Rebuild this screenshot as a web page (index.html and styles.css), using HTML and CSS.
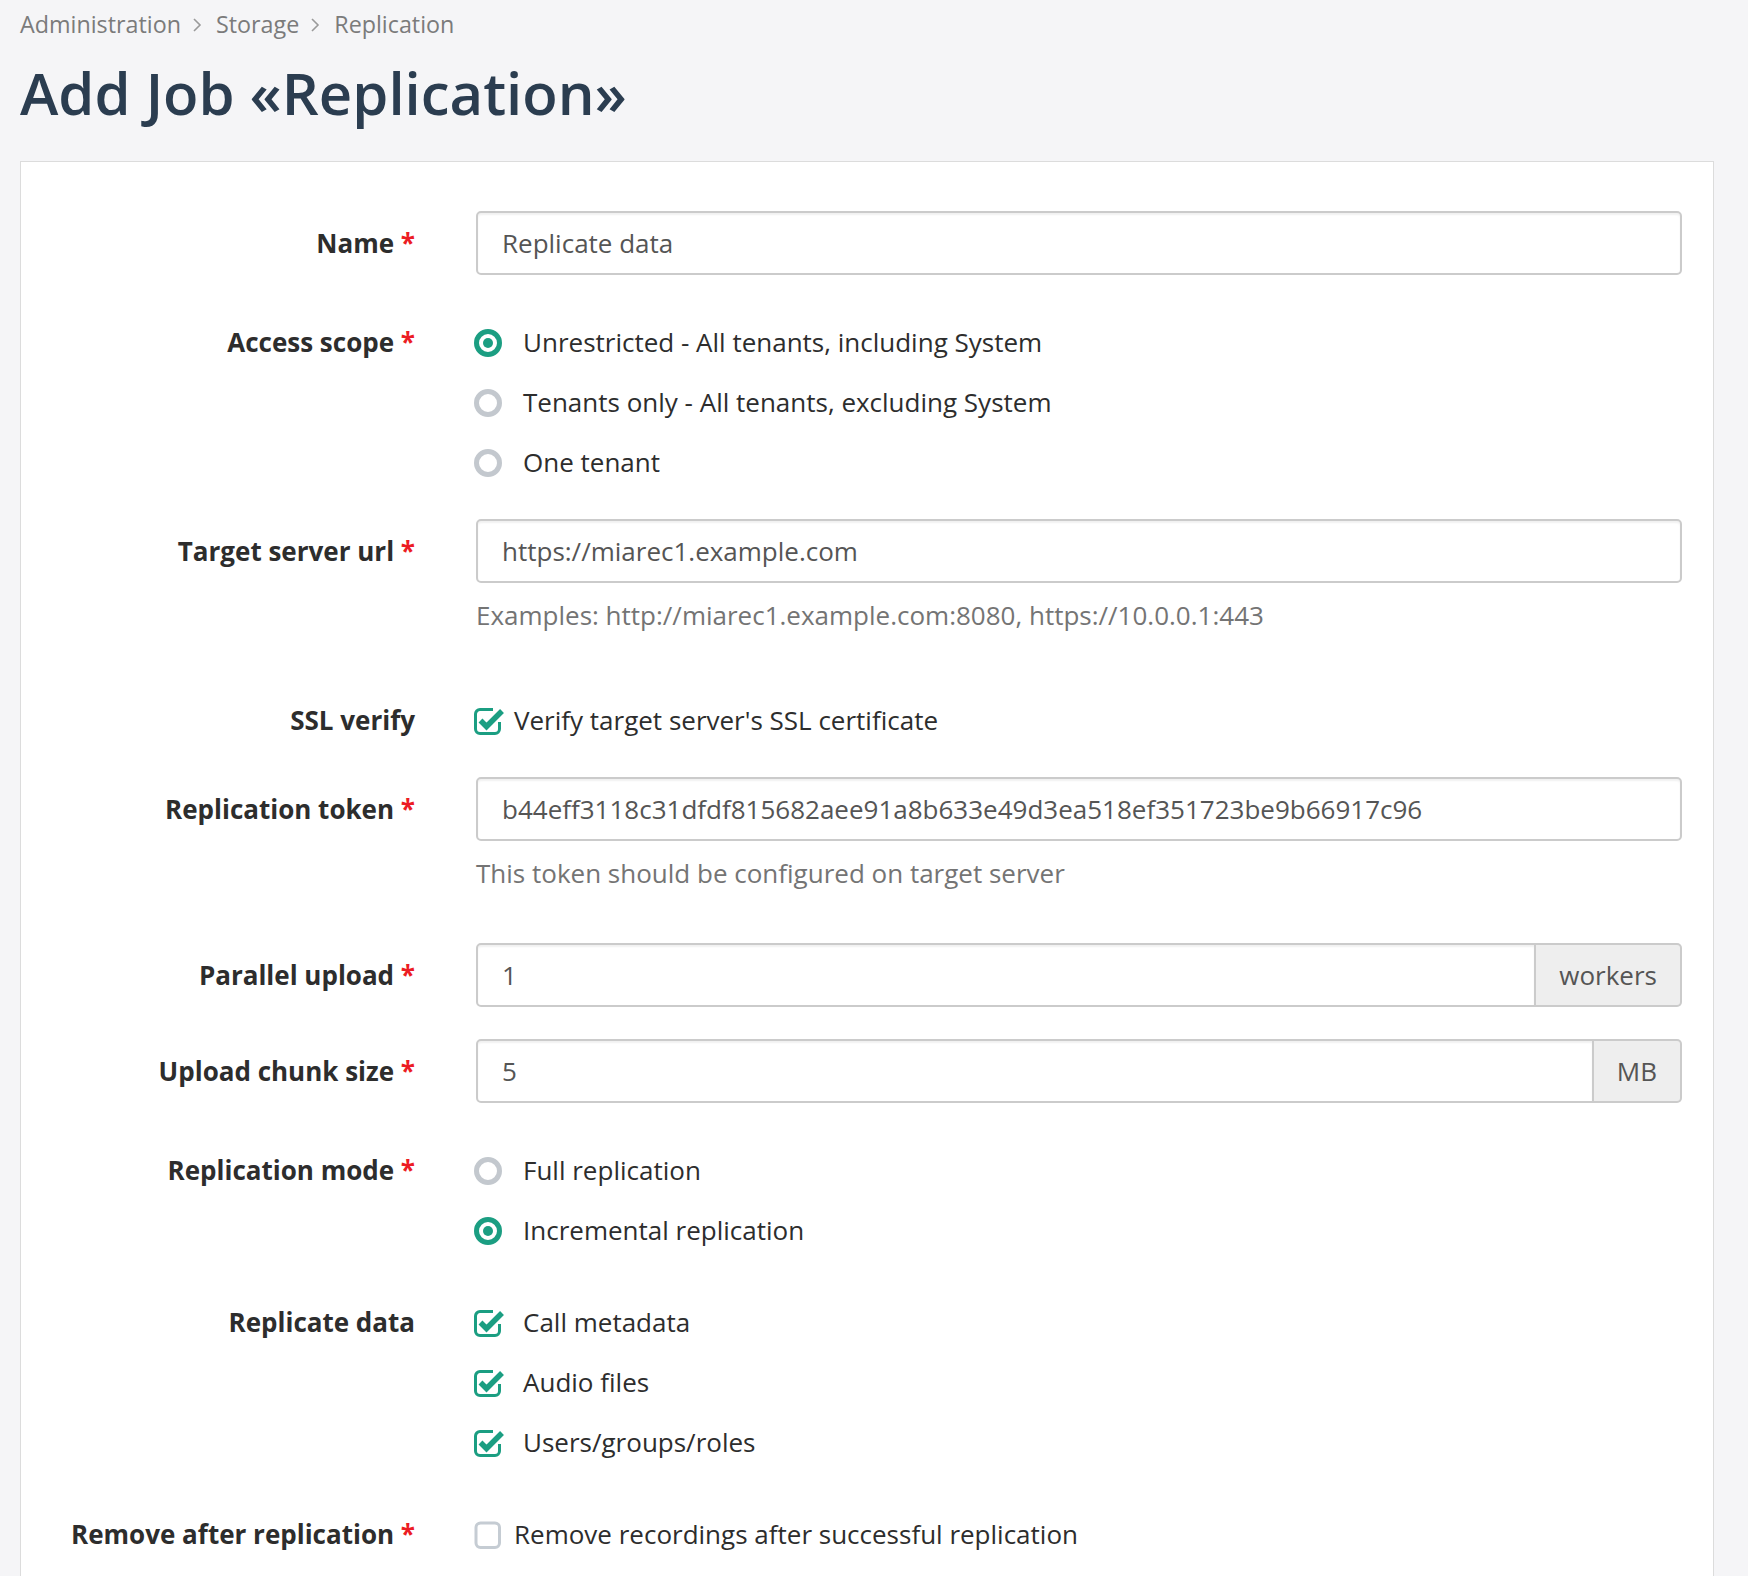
FILE: index.html
```html
<!DOCTYPE html>
<html lang="en">
<head>
<meta charset="utf-8">
<title>Add Job «Replication»</title>
<link rel="stylesheet" href="styles.css">
</head>
<body>
<div class="page">
  <nav class="breadcrumb">
    <a class="crumb">Administration</a>
    <svg class="sep" viewBox="0 0 10 16" width="10" height="16"><path d="M2 2 L8 8 L2 14" fill="none" stroke="#9a9a9a" stroke-width="1.6"/></svg>
    <a class="crumb">Storage</a>
    <svg class="sep" viewBox="0 0 10 16" width="10" height="16"><path d="M2 2 L8 8 L2 14" fill="none" stroke="#9a9a9a" stroke-width="1.6"/></svg>
    <span class="crumb">Replication</span>
  </nav>
  <h1 class="title">Add Job «Replication»</h1>

  <div class="card">
    <form class="form">
      <div class="group">
        <label class="label">Name <span class="req">*</span></label>
        <div class="control"><div class="input">Replicate data</div></div>
      </div>

      <div class="group">
        <label class="label list-label">Access scope <span class="req">*</span></label>
        <div class="control list">
          <div class="item"><svg class="radio" viewBox="0 0 28 28"><circle cx="14" cy="14" r="11.5" fill="none" stroke="#1b9e82" stroke-width="5"/><circle cx="14" cy="14" r="5" fill="#1b9e82"/></svg><span>Unrestricted - All tenants, including System</span></div>
          <div class="item"><svg class="radio" viewBox="0 0 28 28"><circle cx="14" cy="14" r="11.5" fill="none" stroke="#c3c8ce" stroke-width="5"/></svg><span>Tenants only - All tenants, excluding System</span></div>
          <div class="item"><svg class="radio" viewBox="0 0 28 28"><circle cx="14" cy="14" r="11.5" fill="none" stroke="#c3c8ce" stroke-width="5"/></svg><span>One tenant</span></div>
        </div>
      </div>

      <div class="group">
        <label class="label">Target server url <span class="req">*</span></label>
        <div class="control">
          <div class="input">https://miarec1.example.com</div>
          <p class="hint">Examples: http://miarec1.example.com:8080, https://10.0.0.1:443</p>
        </div>
      </div>

      <div class="group">
        <label class="label list-label">SSL verify</label>
        <div class="control list">
          <div class="item single"><svg class="check" viewBox="0 0 30 30"><path d="M19 3.5 H6 a4.5 4.5 0 0 0 -4.5 4.5 V23 a4.5 4.5 0 0 0 4.5 4.5 H21 a4.5 4.5 0 0 0 4.5 -4.5 V16" fill="none" stroke="#1b9e82" stroke-width="3"/><path d="M6.5 14.5 L12.5 20.5 L28 5" fill="none" stroke="#1b9e82" stroke-width="5.5"/></svg><span>Verify target server's SSL certificate</span></div>
        </div>
      </div>

      <div class="group">
        <label class="label">Replication token <span class="req">*</span></label>
        <div class="control">
          <div class="input">b44eff3118c31dfdf815682aee91a8b633e49d3ea518ef351723be9b66917c96</div>
          <p class="hint">This token should be configured on target server</p>
        </div>
      </div>

      <div class="group">
        <label class="label">Parallel upload <span class="req">*</span></label>
        <div class="control">
          <div class="input-group"><div class="input grow">1</div><div class="addon">workers</div></div>
        </div>
      </div>

      <div class="group">
        <label class="label">Upload chunk size <span class="req">*</span></label>
        <div class="control">
          <div class="input-group"><div class="input grow">5</div><div class="addon">MB</div></div>
        </div>
      </div>

      <div class="group">
        <label class="label list-label">Replication mode <span class="req">*</span></label>
        <div class="control list">
          <div class="item"><svg class="radio" viewBox="0 0 28 28"><circle cx="14" cy="14" r="11.5" fill="none" stroke="#c3c8ce" stroke-width="5"/></svg><span>Full replication</span></div>
          <div class="item"><svg class="radio" viewBox="0 0 28 28"><circle cx="14" cy="14" r="11.5" fill="none" stroke="#1b9e82" stroke-width="5"/><circle cx="14" cy="14" r="5" fill="#1b9e82"/></svg><span>Incremental replication</span></div>
        </div>
      </div>

      <div class="group">
        <label class="label list-label">Replicate data</label>
        <div class="control list">
          <div class="item"><svg class="check" viewBox="0 0 30 30"><path d="M19 3.5 H6 a4.5 4.5 0 0 0 -4.5 4.5 V23 a4.5 4.5 0 0 0 4.5 4.5 H21 a4.5 4.5 0 0 0 4.5 -4.5 V16" fill="none" stroke="#1b9e82" stroke-width="3"/><path d="M6.5 14.5 L12.5 20.5 L28 5" fill="none" stroke="#1b9e82" stroke-width="5.5"/></svg><span>Call metadata</span></div>
          <div class="item"><svg class="check" viewBox="0 0 30 30"><path d="M19 3.5 H6 a4.5 4.5 0 0 0 -4.5 4.5 V23 a4.5 4.5 0 0 0 4.5 4.5 H21 a4.5 4.5 0 0 0 4.5 -4.5 V16" fill="none" stroke="#1b9e82" stroke-width="3"/><path d="M6.5 14.5 L12.5 20.5 L28 5" fill="none" stroke="#1b9e82" stroke-width="5.5"/></svg><span>Audio files</span></div>
          <div class="item"><svg class="check" viewBox="0 0 30 30"><path d="M19 3.5 H6 a4.5 4.5 0 0 0 -4.5 4.5 V23 a4.5 4.5 0 0 0 4.5 4.5 H21 a4.5 4.5 0 0 0 4.5 -4.5 V16" fill="none" stroke="#1b9e82" stroke-width="3"/><path d="M6.5 14.5 L12.5 20.5 L28 5" fill="none" stroke="#1b9e82" stroke-width="5.5"/></svg><span>Users/groups/roles</span></div>
        </div>
      </div>

      <div class="group">
        <label class="label list-label">Remove after replication <span class="req">*</span></label>
        <div class="control list">
          <div class="item single"><svg class="check" viewBox="0 0 30 30"><rect x="2" y="3" width="23.5" height="24.5" rx="4.5" fill="none" stroke="#c5ccd3" stroke-width="3"/></svg><span>Remove recordings after successful replication</span></div>
        </div>
      </div>
    </form>
  </div>
</div>
</body>
</html>
```

FILE: styles.css
```css
* { box-sizing: border-box; }

html, body {
  margin: 0;
  padding: 0;
  background: #f5f5f7;
  font-family: "Open Sans", "Noto Sans", "Liberation Sans", sans-serif;
  color: #333;
}

.page {
  padding: 9px 34px 0 20px;
}

.breadcrumb {
  display: flex;
  align-items: center;
  height: 30px;
  font-size: 23.3px;
  line-height: 30px;
  color: #7b7b7b;
}

.crumb {
  color: #7b7b7b;
  text-decoration: none;
}

.sep {
  margin: 2px 14px 0 11px;
}

.title {
  margin: 24px 0 38px 0;
  font-size: 58px;
  line-height: 60px;
  font-weight: 600;
  color: #2b3d50;
}

.card {
  background: #fff;
  border: 1px solid #dcdcdc;
  border-bottom: none;
  padding: 49px 31px 80px 0;
  min-height: 1420px;
}

.form {
  display: flex;
  flex-direction: column;
  gap: 32px;
}

.group {
  display: grid;
  grid-template-columns: 394px 1206px;
  column-gap: 61px;
  align-items: start;
}

.label {
  text-align: right;
  font-weight: 700;
  font-size: 26px;
  line-height: 64px;
  color: #2d2d2d;
}

.list-label {
  line-height: 42px;
  padding-top: 14px;
}

.req {
  color: #ec1c24;
  font-weight: 700;
}

.control {
  min-width: 0;
}

.input {
  height: 64px;
  border: 2px solid #cbcbcb;
  border-radius: 5px;
  box-shadow: inset 0 2px 2px rgba(0, 0, 0, 0.06);
  padding: 0 24px;
  font-size: 26px;
  line-height: 60px;
  color: #555;
  background: #fff;
  white-space: nowrap;
}

.input-group {
  display: flex;
}

.input.grow {
  flex: 1;
  border-top-right-radius: 0;
  border-bottom-right-radius: 0;
}

.addon {
  height: 64px;
  padding: 0 23px;
  font-size: 26px;
  line-height: 60px;
  color: #555;
  background: #eeeeee;
  border: 2px solid #cbcbcb;
  border-left: none;
  border-radius: 0 5px 5px 0;
}

.hint {
  margin: 14px 0 20px 0;
  font-size: 26px;
  line-height: 36px;
  color: #747474;
}

.list {
  display: flex;
  flex-direction: column;
  gap: 18px;
  padding-top: 14px;
  padding-bottom: 4px;
}

.item {
  display: flex;
  align-items: center;
  height: 42px;
  font-size: 26px;
  color: #2d2d2d;
  margin-left: -2px;
}

.item .radio {
  width: 28px;
  height: 28px;
  margin-top: 2px;
  margin-right: 21px;
  flex: none;
}

.item .check {
  width: 30px;
  height: 30px;
  margin-top: 1px;
  margin-right: 19px;
  flex: none;
}

.item.single .check {
  margin-right: 10px;
}
```
